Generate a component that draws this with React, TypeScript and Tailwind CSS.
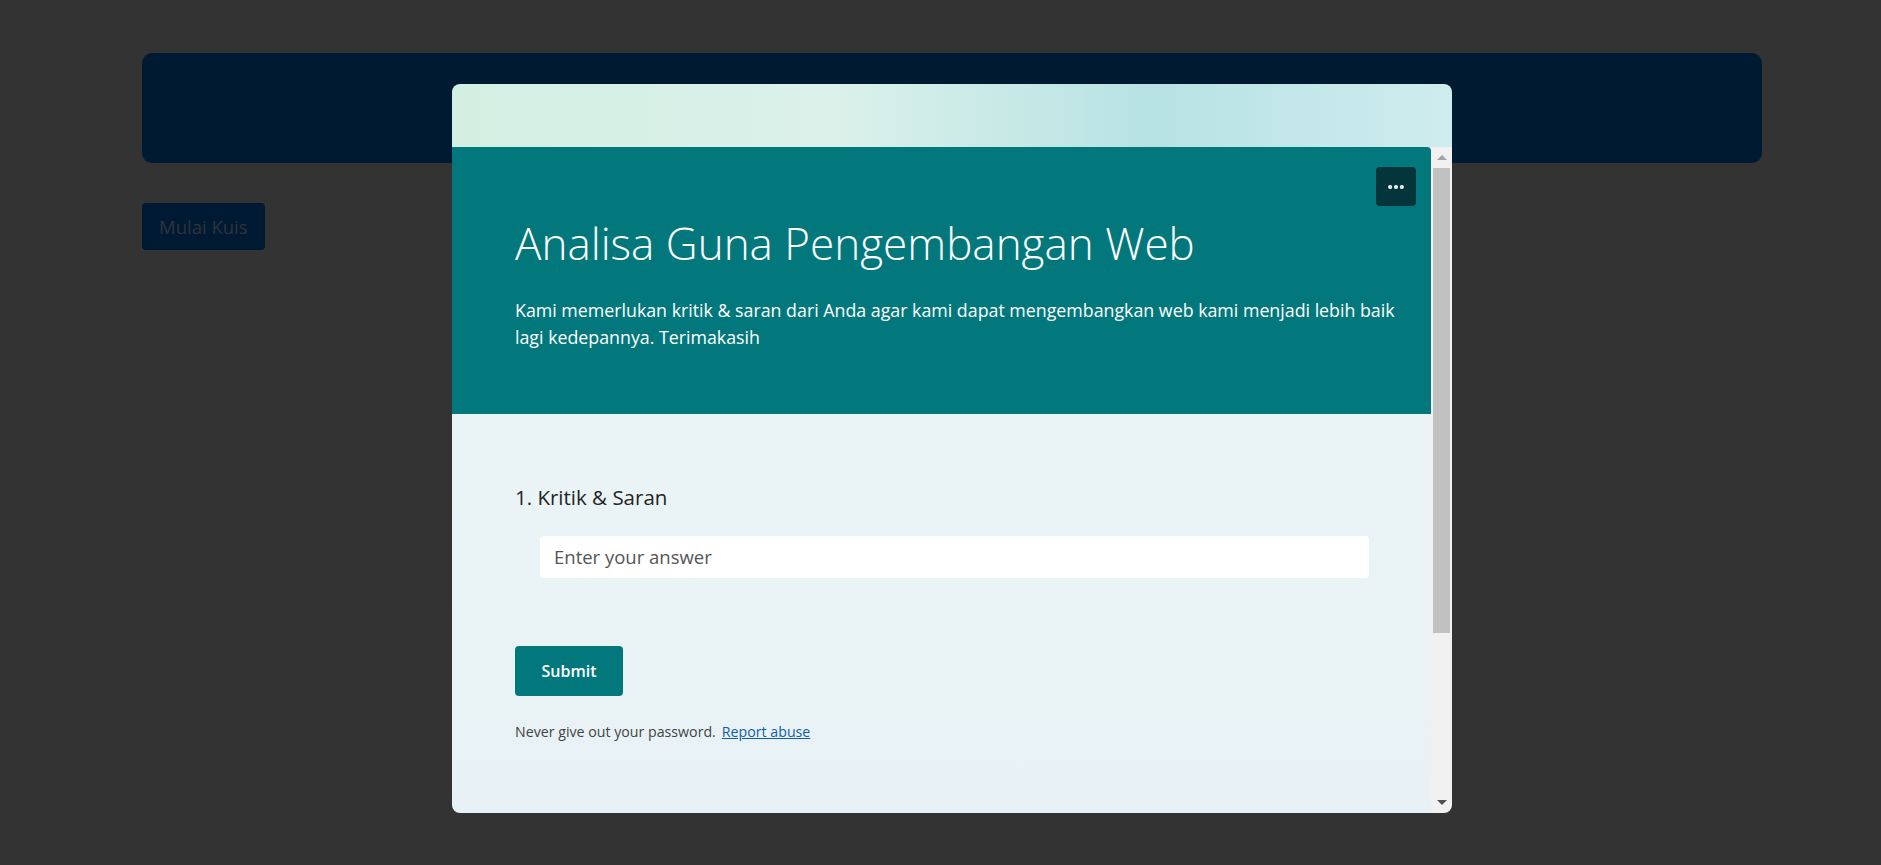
import { MoreHorizontal } from "lucide-react";

const Scrollbar = () => (
  <div className="w-[21px] shrink-0 bg-[#f1f1f1] flex flex-col items-center">
    <div className="h-[21px] flex items-center justify-center">
      <div className="w-0 h-0 border-l-[5px] border-r-[5px] border-b-[5px] border-l-transparent border-r-transparent border-b-[#a3a3a3]" />
    </div>
    <div className="w-[17px] h-[465px] bg-[#c1c1c1]" />
    <div className="flex-1" />
    <div className="h-[21px] flex items-center justify-center">
      <div className="w-0 h-0 border-l-[5px] border-r-[5px] border-t-[5px] border-l-transparent border-r-transparent border-t-[#505050]" />
    </div>
  </div>
);

const FormModal = () => {
  return (
    <div className="absolute left-[452px] top-[84px] w-[1000px] h-[729px] rounded-[8px] overflow-hidden flex flex-col">
      {/* top banner */}
      <div className="h-[63px] shrink-0 bg-[linear-gradient(90deg,#d3efe2_0%,#dbf1ea_38%,#b7e2e3_70%,#cfecee_100%)]" />

      <div className="flex flex-1 min-h-0">
        <div className="flex-1 min-w-0 overflow-hidden bg-[linear-gradient(180deg,#ecf5f4_0%,#e8f2f6_100%)]">
          {/* header */}
          <div className="bg-[#03787c] rounded-tr-[4px] h-[267px] pt-[20px] pr-[15px] pl-[63px]">
            <div className="flex justify-end">
              <button className="w-[40px] h-[39px] rounded-[4px] bg-[#03353a] flex items-center justify-center text-white">
                <MoreHorizontal className="w-[20px] h-[20px]" strokeWidth={3} />
              </button>
            </div>
            <h1 className="mt-[9px] text-[44px] leading-[56px] font-light text-white">
              Analisa Guna Pengembangan Web
            </h1>
            <p className="mt-[26px] w-[900px] text-[17.8px] leading-[27px] text-white">
              Kami memerlukan kritik &amp; saran dari Anda agar kami dapat mengembangkan web kami menjadi lebih baik lagi kedepannya. Terimakasih
            </p>
          </div>

          {/* body */}
          <div className="pl-[63px] pt-[69px]">
            <div className="text-[20.5px] leading-[28px] text-[#242424]">1. Kritik &amp; Saran</div>
            <div className="ml-[25px] mt-[25px] w-[829px] h-[42px] bg-white rounded-[4px] flex items-center pl-[14px]">
              <input
                placeholder="Enter your answer"
                className="w-full bg-transparent outline-none text-[18.5px] text-[#242424] placeholder:text-[#555555]"
              />
            </div>
            <button className="mt-[68px] w-[108px] h-[50px] rounded-[4px] bg-[#03787c] text-white text-[16px] font-semibold">
              Submit
            </button>
            <div className="mt-[26px] text-[14.2px] leading-[20px] text-[#424242] flex gap-[6px]">
              <span>Never give out your password.</span>
              <a href="#" className="text-[#115ea3] underline">Report abuse</a>
            </div>
          </div>
        </div>
        <Scrollbar />
      </div>
    </div>
  );
};

export default function App() {
  return (
    <div className="relative w-full h-[865px] bg-[#333333] overflow-hidden font-['Open_Sans','Noto_Sans',sans-serif]">
      <div className="pt-[53px] pl-[142px]">
        <div className="w-[1620px] h-[110px] rounded-[10px] bg-[#001a31]" />
        <button className="mt-[40px] h-[47px] px-[17px] rounded-[4px] bg-[#001a33] text-[18.5px] text-[#2f333b]">
          Mulai Kuis
        </button>
      </div>
      <FormModal />
    </div>
  );
}
